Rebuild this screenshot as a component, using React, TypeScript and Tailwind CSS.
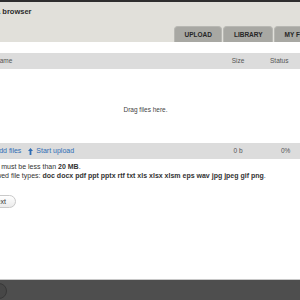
import React from "react";

const TABS = ["Upload", "Library", "My files"];

const UpArrow = () => (
  <svg width="5" height="7" viewBox="0 0 5 7" aria-hidden="true" className="shrink-0">
    <path d="M2.5 0 L5 3 H3.4 V7 H1.6 V3 H0 Z" fill="#2f6db5" />
  </svg>
);

const App = () => (
  <div className="h-[300px] w-[300px] overflow-hidden bg-white font-['Liberation_Sans',Arial,sans-serif] text-[#333]">
    {/* page is cropped on the left, so the frame starts a little off-screen */}
    <div className="ml-[-22px] flex h-full w-[335px] flex-col">
      <div className="h-[2px] bg-[#2e2e2e]" />

      <header className="flex h-[40px] flex-col bg-[#e1e0da]">
        <h1 className="pl-[1px] pt-[5px] text-[7.5px] font-bold leading-[9px] text-[#2b2b2b]">Media browser</h1>
        <nav className="mt-auto flex gap-[1px] pl-[196px]">
          {TABS.map((t) => (
            <div
              key={t}
              className="h-[16px] shrink-0 whitespace-nowrap rounded-t-[4px] border-x border-t border-[#b8b8b3] bg-[#a8a8a3] px-[9.5px] text-[6.5px] font-bold uppercase leading-[15px] text-[#262626]"
            >
              {t}
            </div>
          ))}
        </nav>
      </header>

      <div className="mt-[11px] flex h-[16px] items-center bg-[#dcdcdc] text-[6.5px] text-[#555]">
        <span className="flex-1 pl-[17px]">Name</span>
        <span className="w-[40px] text-center">Size</span>
        <span className="w-[55px] pl-[12px]">Status</span>
      </div>

      <div className="flex h-[74px] items-center justify-center pt-[7px] text-[6.5px] text-[#444]">Drag files here.</div>

      <div className="flex h-[16px] items-center bg-[#dcdcdc] text-[7px]">
        <div className="flex flex-1 items-center pl-[16.5px] text-[#2f6db5]">
          <span>Add files</span>
          <span className="ml-[7px] flex items-center gap-[3px]">
            <UpArrow />
            Start upload
          </span>
        </div>
        <span className="w-[40px] text-center text-[6.5px] text-[#555]">0 b</span>
        <span className="w-[55px] pl-[23px] text-[6.5px] text-[#555]">0%</span>
      </div>

      <div className="mt-[3px] pl-[6.5px] text-[7px] leading-[9px] text-[#333]">
        <p>
          Files must be less than <b>20 MB</b>.
        </p>
        <p className="whitespace-nowrap">
          Allowed file types: <b>doc docx pdf ppt pptx rtf txt xls xlsx xlsm eps wav jpg jpeg gif png</b>.
        </p>
      </div>

      <button className="ml-[3.5px] mt-[15px] h-[13px] self-start rounded-full border border-[#c9c9c9] bg-gradient-to-b from-white to-[#ebebeb] px-[9px] text-[7px] leading-[11px] text-[#333]">
        Next
      </button>

      <footer className="relative mt-auto h-[21px] border-t border-[#c8c8c8] bg-[#4e4e4e]">
        <div className="absolute left-[13px] top-[3px] h-[16px] w-[16px] rounded-full border border-[#383838] bg-[#474747]" />
      </footer>
    </div>
  </div>
);

export default App;
